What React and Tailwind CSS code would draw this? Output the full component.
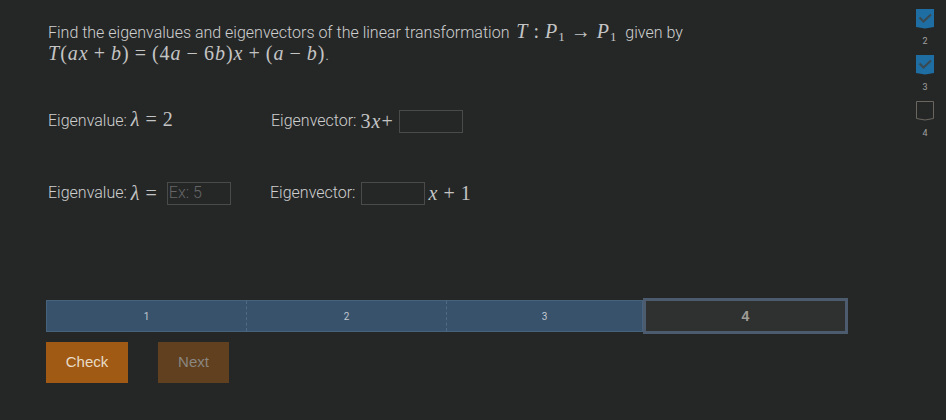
const M = ({ children, className = "" }) => (
  <span className={`font-['Liberation_Serif',serif] text-[20px] leading-none font-normal tracking-[1px] text-[#c4c4c4] ${className}`}>{children}</span>
);
const I = ({ children }) => <i className="italic">{children}</i>;
const Op = ({ children }) => <span className="mx-[5px]">{children}</span>;
const Sub = () => <sub className="text-[13px]">1</sub>;

function Flag({ done, label }) {
  return (
    <div className="flex flex-col items-center">
      <svg width="20" height="21" viewBox="0 0 20 21" className="block">
        {done ? (
          <>
            <path d="M1 1H19V19L10 20.5L1 19Z" fill="#1f6ea3" />
            <path d="M4.5 9.5L8.5 13.5L16 6.5" fill="none" stroke="#3a4a52" strokeWidth="2.2" />
          </>
        ) : (
          <path d="M1.5 1.5H18.5V18.5L10 20L1.5 18.5Z" fill="none" stroke="#6b665f" strokeWidth="1" />
        )}
      </svg>
      <span className="mt-[6px] h-[12px] text-[9px] font-normal leading-[12px] text-[#a0a0a0]">{label}</span>
    </div>
  );
}

const Box = ({ placeholder, className = "" }) => (
  <input
    readOnly
    placeholder={placeholder}
    className={`h-[23px] w-[64px] shrink-0 border border-[#4a4a4a] bg-transparent px-[1px] text-[16px] font-light placeholder:text-[#666] outline-none ${className}`}
  />
);

function Seg({ n, last }) {
  return (
    <div className={`flex h-full items-center justify-center text-[10px] font-normal text-[#c0c8d0] ${last ? "flex-1" : "w-[200px] border-r border-dashed border-r-[#4f6b85]"}`}>
      {n}
    </div>
  );
}

export default function App() {
  return (
    <div className="flex h-[420px] w-[946px] overflow-hidden bg-[#252727] font-['Roboto',sans-serif] font-light text-[#cfcfcf]">
      <main className="w-[905px] pl-[46px]">
        <div className="h-[65px] pt-[21px] pl-[2px] text-[16px] leading-[22px]">
          <p className="h-[22px]">
            Find the eigenvalues and eigenvectors of the linear transformation <M className="ml-[3px] mr-[4px]"><I>T</I><Op>:</Op><I>P</I><Sub /><Op>→</Op><I>P</I><Sub /></M> given by
          </p>
          <p className="h-[22px]">
            <M><I>T</I>(<I>ax</I><Op>+</Op><I>b</I>)<Op>=</Op>(4<I>a</I><Op>−</Op>6<I>b</I>)<I>x</I><Op>+</Op>(<I>a</I><Op>−</Op><I>b</I>)</M>.
          </p>
        </div>

        <div className="mt-[44px] flex h-[24px] items-center pl-[2px] text-[16px]">
          <div className="w-[223px]">Eigenvalue: <M><I>λ</I><Op>=</Op>2</M></div>
          <div className="flex items-center">
            Eigenvector: <M className="ml-[4px]">3<I>x</I>+</M><Box className="ml-[5px]" />
          </div>
        </div>

        <div className="mt-[48px] flex h-[24px] items-center pl-[2px] text-[16px]">
          <div className="flex w-[222px] items-center">
            Eigenvalue: <M className="mx-[4px]"><I>λ</I><Op>=</Op></M><Box placeholder="Ex: 5" />
          </div>
          <div className="flex items-center">
            Eigenvector: <Box className="ml-[6px]" /><M className="ml-[3px]"><I>x</I><Op>+</Op>1</M>
          </div>
        </div>

        <div className="mt-[93px] flex h-[36px] items-center">
          <div className="flex h-[32px] w-[597px] border border-[#46627c] bg-[#38526c]">
            <Seg n="1" />
            <Seg n="2" />
            <Seg n="3" last />
          </div>
          <div className="flex h-[36px] w-[205px] items-center justify-center border-[3px] border-[#4d5b6f] bg-[#2f3130] font-['Liberation_Sans',sans-serif] text-[14px] font-bold text-[#a09d98]">
            4
          </div>
        </div>

        <div className="mt-[8px] flex gap-[30px] font-['Liberation_Sans',sans-serif] text-[15px] font-normal">
          <button className="h-[41px] w-[82px] bg-[#a05a14] text-[#e8dcc8]">Check</button>
          <button className="h-[41px] w-[71px] bg-[#60401e] text-[#8a8680]">Next</button>
        </div>
      </main>
      <aside className="flex w-[40px] flex-col gap-[7px] pt-[8px]">
        <Flag done label="2" />
        <Flag done label="3" />
        <Flag label="4" />
      </aside>
    </div>
  );
}
